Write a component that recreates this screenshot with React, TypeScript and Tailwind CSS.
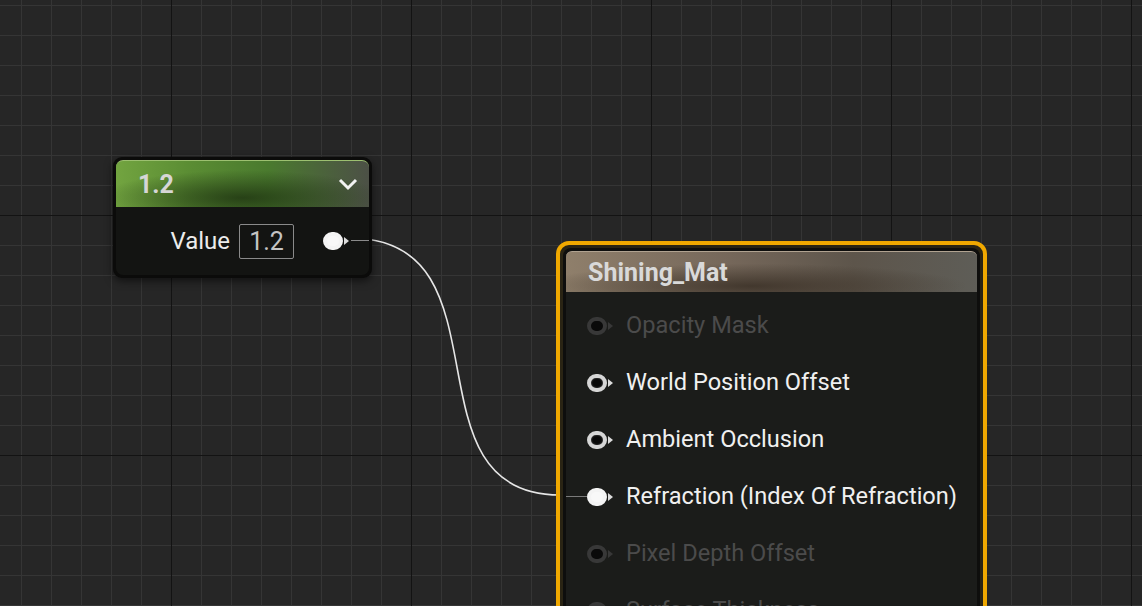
import React from "react";

type PinState = "dim" | "open" | "linked";

const inputs: { label: string; state: PinState }[] = [
  { label: "Opacity Mask", state: "dim" },
  { label: "World Position Offset", state: "open" },
  { label: "Ambient Occlusion", state: "open" },
  { label: "Refraction (Index Of Refraction)", state: "linked" },
  { label: "Pixel Depth Offset", state: "dim" },
  { label: "Surface Thickness", state: "dim" },
];

function Pin({ state }: { state: PinState }) {
  const ring =
    state === "dim"
      ? "border-[#383838] bg-[#0a0a0a]"
      : state === "open"
      ? "border-[#d6d6d6] bg-[#080808] shadow-[inset_0_0_2px_rgba(255,255,255,0.4)]"
      : "border-[#f4f4f4] bg-[#f8f8f8]";
  const tri = state === "dim" ? "border-l-[#383838]" : "border-l-[#dcdcdc]";
  return (
    <span className="flex items-center">
      <span className={`block h-[18px] w-[20px] rounded-full border-[4px] ${ring}`} />
      <span className={`ml-[1px] block h-0 w-0 border-y-[4px] border-l-[5px] border-y-transparent ${tri}`} />
    </span>
  );
}

export default function App() {
  return (
    <div
      className="relative h-[606px] w-[1142px] overflow-hidden bg-[#262626] bg-[linear-gradient(to_right,#131313_1px,transparent_1px),linear-gradient(to_bottom,#131313_1px,transparent_1px),linear-gradient(to_right,#353535_1px,transparent_1px),linear-gradient(to_bottom,#353535_1px,transparent_1px)] bg-[size:240px_240px,240px_240px,30px_30px,30px_30px] bg-[position:171px_0,0_215px,21px_0,0_5px]"
      style={{ fontFamily: "Roboto, 'Liberation Sans', sans-serif" }}
    >
      {/* wire */}
      <svg className="absolute left-0 top-0" width="1142" height="606">
        <path
          d="M 350 238 C 515 238, 400 495, 560 495"
          fill="none"
          stroke="#e6e6e6"
          strokeWidth="1.6"
        />
      </svg>

      {/* constant node */}
      <div className="absolute left-[113px] top-[157px] w-[259px] rounded-[9px] bg-[#0b0b0a] p-[3px] shadow-[0_3px_8px_rgba(0,0,0,0.55)]">
        <div className="flex h-[47px] items-center justify-between rounded-t-[7px] border-t border-[#9cc070] bg-[radial-gradient(ellipse_75%_80%_at_50%_80%,rgba(32,54,18,0.85),transparent_75%),linear-gradient(to_right,#72a440,#5a8c33_30%,#4a7a2e_60%,#4c5046)] pl-[22px] pr-[11px]">
          <span className="text-[25px] font-bold leading-none text-[#d6d6d6]">1.2</span>
          <svg width="20" height="14" viewBox="0 0 20 14">
            <polyline points="2,3 10,11 18,3" fill="none" stroke="#f2f2f2" strokeWidth="3" />
          </svg>
        </div>
        <div className="relative flex h-[68px] items-center justify-end rounded-b-[7px] bg-[#131412] pr-[20px]">
          <span className="text-[24px] leading-none text-[#ececec]">Value</span>
          <span className="ml-[9px] flex h-[35px] w-[55px] items-center justify-center rounded-[2px] border-[1.5px] border-[#8a8a8a] text-[25px] leading-none text-[#c4c4c4]">
            1.2
          </span>
          <span className="ml-[29px]">
            <Pin state="linked" />
          </span>
          <span className="absolute right-0 top-[33px] h-px w-[18px] bg-[#8a8a8a]" />
        </div>
      </div>

      {/* material node */}
      <div className="absolute left-[556px] top-[241px] h-[420px] w-[431px] rounded-[13px] border-[4px] border-[#f0a800] bg-[#2a2414] p-[3px]">
        <div className="h-full rounded-[8px] bg-[#0e0e0d] p-[3px]">
          <div className="flex h-[41px] items-center rounded-t-[6px] border-t border-[#b0a290] bg-[radial-gradient(ellipse_70%_75%_at_45%_85%,rgba(58,48,38,0.85),transparent_75%),linear-gradient(to_right,#8f7f6b,#75675a_40%,#5d554b_70%,#5e5d57)] pl-[22px]">
            <span className="text-[25px] font-bold leading-none text-[#d9d9d9]">Shining_Mat</span>
          </div>
          <div className="relative h-full bg-[#1b1c1a] pt-[5px]">
            {inputs.map((row) => (
              <div key={row.label} className="relative flex h-[57px] items-center pl-[21px]">
                {row.state === "linked" && (
                  <span className="absolute left-0 top-[28px] h-px w-[21px] bg-[#7a7a7a]" />
                )}
                <Pin state={row.state} />
                <span
                  className={`ml-[13px] text-[23.6px] leading-none ${
                    row.state === "dim" ? "text-[#4b4b4b]" : "text-[#f0f0f0]"
                  }`}
                >
                  {row.label}
                </span>
              </div>
            ))}
          </div>
        </div>
      </div>
    </div>
  );
}
